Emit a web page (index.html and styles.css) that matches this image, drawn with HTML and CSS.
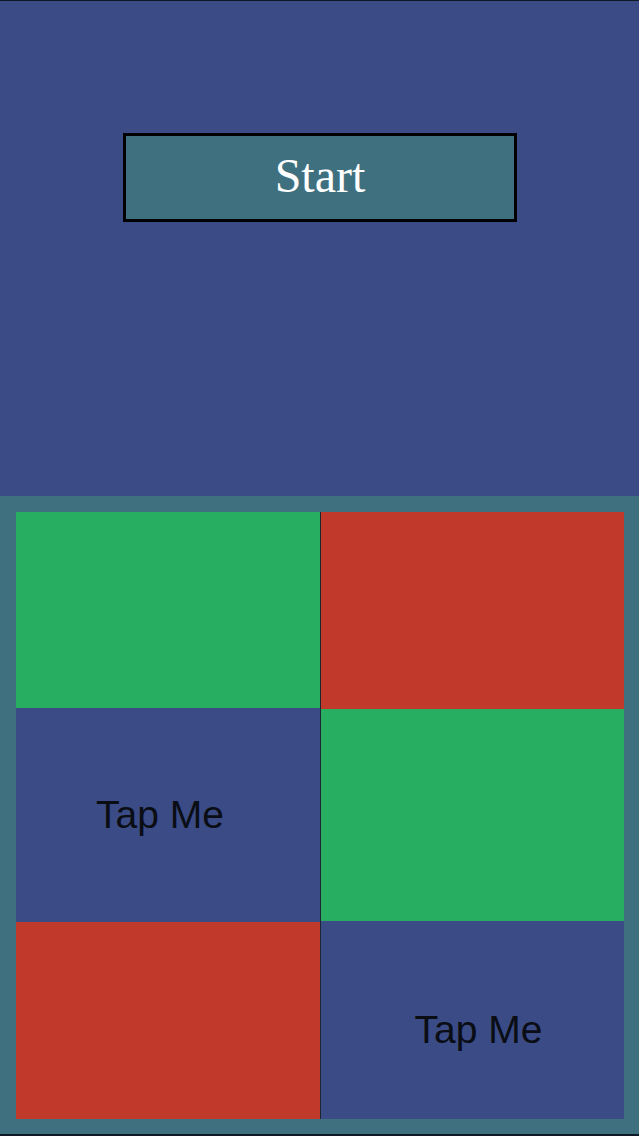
FILE: index.html
```html
<!DOCTYPE html>
<html>
<head>
<meta charset="utf-8">
<link rel="stylesheet" href="styles.css">
</head>
<body>
<div class="screen">
  <section class="top">
    <button class="start">Start</button>
  </section>
  <section class="board">
    <div class="col col-left">
      <div class="cell green h196"></div>
      <div class="cell blue h214"><span class="tap tap-left">Tap Me</span></div>
      <div class="cell red h197"></div>
    </div>
    <div class="divider"></div>
    <div class="col col-right">
      <div class="cell red h197"></div>
      <div class="cell green h212"></div>
      <div class="cell blue h198"><span class="tap tap-right">Tap Me</span></div>
    </div>
  </section>
</div>
</body>
</html>
```

FILE: styles.css
```css
html, body {
  margin: 0;
  padding: 0;
  background: #0d1a26;
}
.screen {
  width: 639px;
  height: 1136px;
  display: flex;
  flex-direction: column;
  border-top: 1px solid #0d1a26;
  box-sizing: border-box;
  overflow: hidden;
}
.top {
  height: 495px;
  background: #3a4b85;
  display: flex;
  flex-direction: column;
  align-items: flex-start;
  padding: 132px 0 0 123px;
  box-sizing: border-box;
  flex: none;
}
.start {
  width: 394px;
  height: 89px;
  border: 3px solid #000;
  background: #3e7080;
  color: #fff;
  font-family: "Liberation Serif", "DejaVu Serif", serif;
  font-size: 48px;
  padding: 0 0 4px 0;
  margin: 0;
  box-sizing: border-box;
}
.board {
  height: 640px;
  background: #3e7080;
  padding: 16px 15px 15px 16px;
  box-sizing: border-box;
  display: flex;
  flex: none;
  border-bottom: 2px solid #0d1a26;
}
.col {
  display: flex;
  flex-direction: column;
}
.col-left { width: 304px; }
.col-right { width: 303px; }
.divider {
  width: 1px;
  height: 607px;
  background: #1c2630;
}
.cell {
  display: flex;
  align-items: center;
  justify-content: center;
  flex: none;
}
.h196 { height: 196px; }
.h197 { height: 197px; }
.h198 { height: 198px; }
.h212 { height: 212px; }
.h214 { height: 214px; }
.green { background: #27ae60; }
.red { background: #c0392b; }
.blue { background: #3a4b85; }
.tap {
  font-family: "Liberation Sans", Arial, sans-serif;
  font-size: 39px;
  color: #0a0d14;
}
.tap-left { margin: 0 16px 0 0; }
.tap-right { margin: 20px 0 0 12px; }
```
